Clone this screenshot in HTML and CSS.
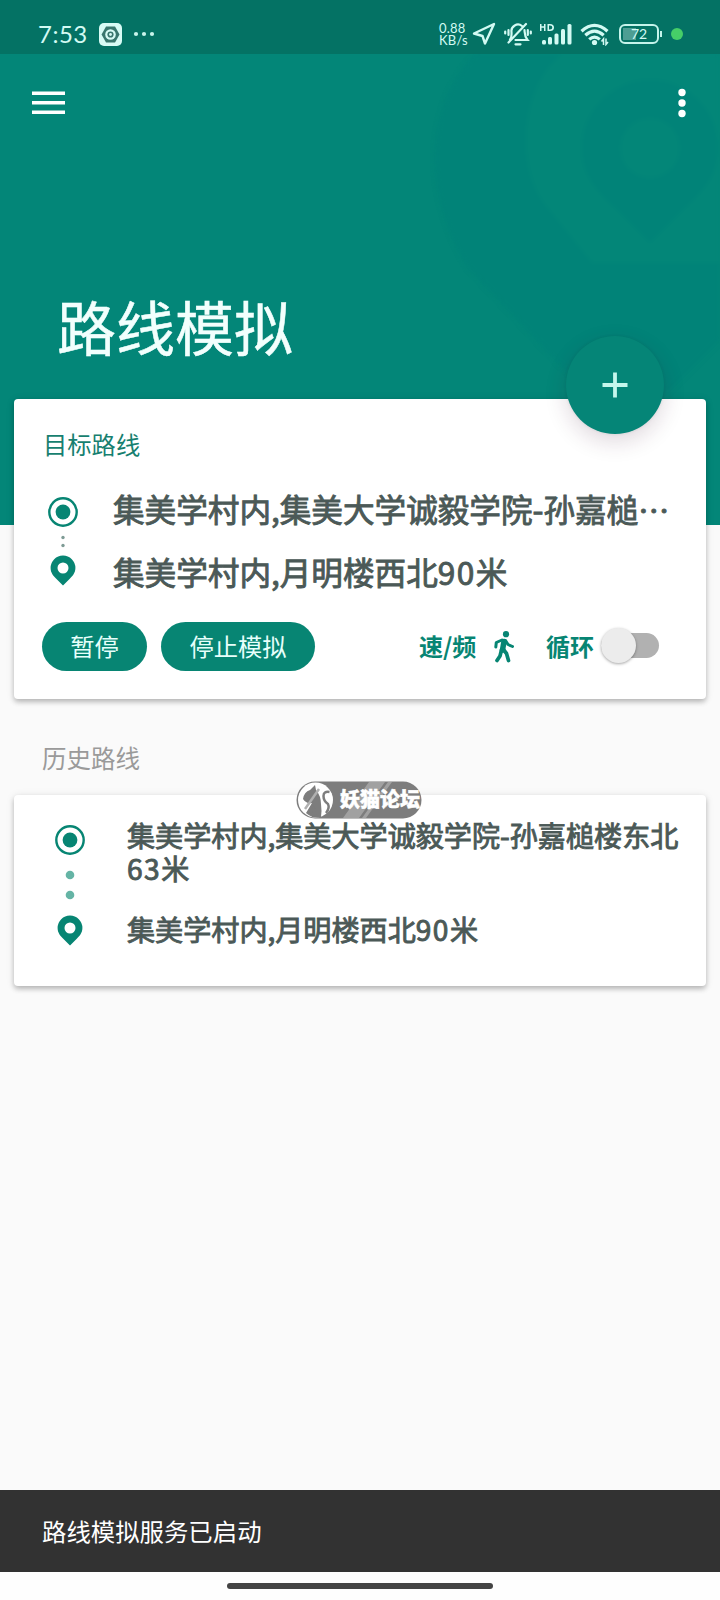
FILE: index.html
```html
<!DOCTYPE html>
<html lang="zh-CN">
<head>
<meta charset="utf-8">
<title>路线模拟</title>
<link rel="stylesheet" href="styles.css">
</head>
<body>
<div class="screen">
  <header class="header">
    <svg class="header-art" viewBox="0 0 720 525">
      <path fill="#018378" d="M476 53C420 110 425 200 468 268L560 365L600 400H660L720 340V53z"/>
      <path fill="#038678" d="M563 53C520 85 514 165 545 205L592 263H720V53z"/>
      <path fill="#018378" fill-rule="evenodd" d="M650 80a68 68 0 0 0-68 68c0 28 16 43 30 57l38 38 38-38c14-14 30-29 30-57a68 68 0 0 0-68-68zm0 38a30 30 0 1 1 0 60 30 30 0 0 1 0-60z"/>
    </svg>
    <div class="status">
      <span class="time">7:53</span>
      <svg class="app-icon" viewBox="0 0 23 23">
        <rect width="23" height="23" rx="5" fill="#d8fbf5"/>
        <path d="M7 3.5h9l4.5 8-4.5 8H7l-4.5-8z" fill="#39766d"/>
        <circle cx="11.5" cy="11.5" r="5.3" fill="#d8fbf5"/>
        <circle cx="11.5" cy="11.5" r="3.1" fill="#39766d"/>
        <circle cx="11.5" cy="11.5" r="1.4" fill="#d8fbf5"/>
      </svg>
      <svg class="more-note" viewBox="0 0 22 6" fill="#c9f5ec"><circle cx="3" cy="3" r="2.1"/><circle cx="11" cy="3" r="2.1"/><circle cx="19" cy="3" r="2.1"/></svg>
      <span class="speed">0.88<br>KB/s</span>
      <svg class="nav-icon" viewBox="0 0 24 24"><path d="M2 11.5L22 2L13 21.5L10.5 14z" fill="none" stroke="#d3faf3" stroke-width="2.4" stroke-linejoin="round"/></svg>
      <svg class="bell-icon" viewBox="0 0 28 24" fill="none" stroke="#d3faf3" stroke-width="2.2" stroke-linecap="round">
        <path d="M6 17.500C8 15.500 7.500 13 7.500 10a6.500 6.500 0 0 1 10.500-6M20.500 8c.3 4 0 6.500 3 10H11.500M4.500 20.500L22 2"/>
        <path d="M11.500 22.300h5M4.500 8v5M1.200 9.500v2M23.800 8v5M26.800 9.500v2"/>
      </svg>
      <svg class="signal-icon" viewBox="0 0 32 22" fill="#d3faf3">
        <path d="M0 1h1.500v2.300H4V1h1.500v7H4V4.800H1.500V8H0zM7.500 1H10q4 0 4 3.500T10 8H7.500zM9 2.500v4h1q2.300 0 2.300-2t-2.300-2z" fill-rule="evenodd"/>
        <rect x="2" y="17" width="4" height="4.500" rx="1.500"/><rect x="8" y="14" width="4" height="7.500" rx="1.500"/><rect x="14.500" y="10.500" width="4" height="11" rx="1.500"/><rect x="21" y="6" width="4" height="15.500" rx="1.500"/><rect x="27.500" y="1" width="4" height="20.500" rx="1.500"/>
      </svg>
      <svg class="wifi-icon" viewBox="0 0 30 23" fill="none" stroke="#d3faf3" stroke-width="3.200">
        <path d="M1.500 8.200q13-11.700 26 0M5.300 12.300q9.200-8.200 18.400 0M9.200 16.400q5.300-4.500 10.600 0"/>
        <circle cx="14.500" cy="19.500" r="2.600" fill="#d3faf3" stroke="none"/>
        <path d="M23.500 22v-6l-2 2.500M26 15.500v6l2-2.500" stroke-width="1.500"/>
      </svg>
      <div class="battery"><span>72</span></div>
      <i class="live-dot"></i>
    </div>
    <div class="toolbar">
      <svg class="menu-icon" viewBox="0 0 33 24" fill="#fff"><path d="M0 .5h33v3.600H0zM0 9.900h33v3.600H0zM0 19.400h33V23H0z"/></svg>
      <svg class="dots-icon" viewBox="0 0 8 30" fill="#fff"><circle cx="4" cy="4.500" r="3.700"/><circle cx="4" cy="15" r="3.700"/><circle cx="4" cy="25.500" r="3.700"/></svg>
    </div>
    <h1 class="title">路线模拟</h1>
  </header>

  <main class="main">
    <section class="card current">
      <button class="fab" aria-label="添加"><svg viewBox="0 0 26 26"><path d="M13 .5v25M.5 13h25" stroke="#c5f7ec" stroke-width="3.800"/></svg></button>
      <h2 class="card-label">目标路线</h2>
      <div class="route">
        <div class="marks">
          <svg class="origin" viewBox="0 0 30 30"><circle cx="15" cy="15" r="13.700" fill="none" stroke="#078573" stroke-width="2.400"/><circle cx="15" cy="15" r="7.400" fill="#078573"/></svg>
          <svg class="link" viewBox="0 0 6 13" fill="#7e9b95"><circle cx="3" cy="2.500" r="1.700"/><circle cx="3" cy="10.500" r="1.700"/></svg>
          <svg class="pin" viewBox="0 0 26 31"><path fill="#078573" fill-rule="evenodd" d="M13 .5A12.400 12.400 0 0 0 .6 13c0 5 3 8 5.400 10.500l7 7 7-7C22.400 21 25.400 18 25.400 13A12.400 12.400 0 0 0 13 .5zm0 7a5.500 5.500 0 1 1 0 11 5.500 5.500 0 0 1 0-11z"/></svg>
        </div>
        <div class="places">
          <p>集美学村内,集美大学诚毅学院-孙嘉槌<span class="ellipsis">⋯</span></p>
          <p>集美学村内,月明楼西北<span class="num">90</span>米</p>
        </div>
      </div>
      <div class="actions">
        <button class="pill">暂停</button>
        <button class="pill wide">停止模拟</button>
        <span class="option speed-opt">速/频</span>
        <svg class="walk" viewBox="0 0 20 32" fill="none" stroke="#078573" stroke-linecap="round" stroke-linejoin="round">
          <circle cx="12" cy="3.200" r="3.100" fill="#078573" stroke="none"/>
          <path d="M10 10.500L8.500 19" stroke-width="5.500"/>
          <path d="M8 9L2.300 11.500L1.800 16M11.500 9.500L14 13.500L18.500 15.500" stroke-width="3"/>
          <path d="M7.500 19L6 25L3 29.500M9 18L12.500 22.500L14.500 29.500" stroke-width="3.700"/>
        </svg>
        <span class="option loop-opt">循环</span>
        <span class="switch"></span>
      </div>
    </section>

    <h2 class="history-label">历史路线</h2>

    <section class="card history">
      <div class="watermark">
        <svg viewBox="0 0 126 38">
          <rect x=".5" y=".5" width="125" height="37" rx="18.500" fill="#7d7d7d"/>
          <path d="M73 1h16L63 37H47zM92 1h4L70 37h-4z" fill="#a1a1a1"/>
          <circle cx="19.500" cy="19" r="17.500" fill="#fff"/>
          <path d="M7 18q1-7 7-9l5-5 1 5q5 6 5 14 1 7 0 13-8 2-15-4L16 22q-6 1-9-4z" fill="#7d7d7d"/>
          <path d="M17 24q4 5 3 12h-4z" fill="#7d7d7d"/>
          <path d="M33.500 11q-6-1-6 4t4.500 8q2 4-2 9" fill="none" stroke="#7d7d7d" stroke-width="2.500"/>
          <path d="M23 8L9 28" stroke="#b0b0b0" stroke-width="2.500"/>
        </svg>
        <span>妖猫论坛</span>
      </div>
      <div class="route">
        <div class="marks">
          <svg class="origin" viewBox="0 0 30 30"><circle cx="15" cy="15" r="13.700" fill="none" stroke="#078573" stroke-width="2.400"/><circle cx="15" cy="15" r="7.400" fill="#078573"/></svg>
          <svg class="link" viewBox="0 0 10 30" fill="#65b4a5"><circle cx="5" cy="5" r="4.300"/><circle cx="5" cy="25" r="4.300"/></svg>
          <svg class="pin" viewBox="0 0 26 31"><path fill="#078573" fill-rule="evenodd" d="M13 .5A12.400 12.400 0 0 0 .6 13c0 5 3 8 5.400 10.500l7 7 7-7C22.400 21 25.400 18 25.400 13A12.400 12.400 0 0 0 13 .5zm0 7a5.500 5.500 0 1 1 0 11 5.500 5.500 0 0 1 0-11z"/></svg>
        </div>
        <div class="places">
          <p>集美学村内,集美大学诚毅学院-孙嘉槌楼东北<br><span class="num">63</span>米</p>
          <p>集美学村内,月明楼西北<span class="num">90</span>米</p>
        </div>
      </div>
    </section>
  </main>

  <div class="snackbar">路线模拟服务已启动</div>
  <div class="gesture"><i></i></div>
</div>
</body>
</html>
```
FILE: styles.css
```css
* { box-sizing: border-box; }
body {
  margin: 0;
  font-family: "Noto Sans CJK SC", sans-serif;
  background: #fafafa;
}
h1, h2, p { margin: 0; font-weight: 400; }
svg { display: block; flex: none; }
button { border: 0; padding: 0; font: inherit; }

.screen {
  width: 720px;
  height: 1600px;
  display: flex;
  flex-direction: column;
  overflow: hidden;
  background: #fafafa;
}

/* Header */
.header {
  position: relative;
  flex: none;
  height: 525px;
  background: #038678;
}
.header-art { position: absolute; inset: 0; width: 720px; height: 525px; filter: blur(2px); }
.status {
  position: relative;
  height: 54px;
  padding: 14px 37px 0 38px;
  display: flex;
  align-items: center;
  background: #047264;
  color: #d3faf3;
}
.time { width: 61px; font: 24px/30px Lato, sans-serif; letter-spacing: .5px; }
.app-icon { width: 23px; height: 23px; }
.more-note { width: 22px; height: 6px; margin-left: 11px; }
.speed {
  margin-left: auto;
  width: 33px;
  font: 13px/12px Lato, sans-serif;
  letter-spacing: .2px;
  white-space: nowrap;
}
.nav-icon { width: 24px; height: 24px; }
.bell-icon { width: 28px; height: 24px; margin-left: 8px; }
.signal-icon { width: 32px; height: 22px; margin-left: 8px; }
.wifi-icon { width: 30px; height: 23px; margin-left: 8px; }
.battery {
  position: relative;
  width: 40px;
  height: 20px;
  margin: 0 12px 0 9px;
  padding: 2px;
  border: 2px solid #c5f4eb;
  border-radius: 6px;
}
.battery::after {
  content: "";
  position: absolute;
  left: 39px;
  top: 5px;
  width: 2px;
  height: 6px;
  background: #c5f4eb;
}
.battery span {
  display: block;
  height: 12px;
  font: 14px/12px Lato, sans-serif;
  text-align: center;
  background: linear-gradient(90deg, #4d9e93 40%, transparent 40%);
}
.live-dot { width: 12px; height: 12px; border-radius: 50%; background: #46cf68; }

.toolbar {
  position: relative;
  height: 98px;
  padding: 0 34px 0 32px;
  display: flex;
  align-items: center;
  justify-content: space-between;
}
.menu-icon { width: 33px; height: 24px; }
.dots-icon { width: 8px; height: 30px; }
.title {
  position: relative;
  margin: 130px 0 0 57px;
  color: #f2fffd;
  font-size: 59px;
  line-height: 88px;
  -webkit-text-stroke: .5px currentColor;
}

/* Cards */
.main { position: relative; flex: 1; margin-top: -126px; padding: 0 14px; }
.card {
  position: relative;
  background: #fff;
  border-radius: 4px;
  box-shadow: 0 3px 5px rgba(0, 0, 0, .22), 0 1px 8px rgba(0, 0, 0, .1);
}
.current { height: 300px; padding: 28px 28px 0; }
.fab {
  position: absolute;
  left: 552px;
  top: -63px;
  width: 98px;
  height: 98px;
  display: grid;
  place-items: center;
  border-radius: 50%;
  background: #058577;
  box-shadow: 0 8px 22px rgba(60, 20, 50, .16), 0 0 3px rgba(0, 60, 50, .12);
}
.fab svg { width: 26px; height: 26px; }
.card-label { padding-left: 1px; color: #177f70; font-size: 24.300px; line-height: 34px; }

.route { display: flex; color: #4b5957; white-space: nowrap; }
.places { -webkit-text-stroke: .9px currentColor; }
.num { letter-spacing: 1.500px; }
.marks { display: flex; flex-direction: column; align-items: center; width: 30px; flex: none; }
.origin { width: 30px; height: 30px; }
.pin { width: 26px; height: 31px; }

.current .route { margin-top: 16px; padding-left: 6px; }
.current .marks { padding-top: 20px; }
.current .link { width: 6px; height: 13px; margin: 8px 0 7px; }
.current .places { margin-left: 35px; font-size: 31.600px; line-height: 63px; }
.ellipsis { font-size: 31px; }

.actions { display: flex; align-items: center; height: 49px; margin-top: 19px; }
.pill {
  width: 105px;
  height: 49px;
  padding-bottom: 2px;
  border-radius: 25px;
  background: #078573;
  color: #e6fffb;
  font-size: 24.300px;
  line-height: 47px;
}
.pill.wide { width: 154px; margin-left: 14px; }
.option { color: #078573; font-size: 24px; line-height: 34px; padding-bottom: 1px; font-weight: 700; }
.speed-opt { margin-left: 104px; width: 75px; }
.walk { width: 20px; height: 32px; }
.loop-opt { margin-left: 32px; width: 55px; }
.switch {
  position: relative;
  top: -1px;
  width: 58px;
  height: 25px;
  border-radius: 13px;
  background: #b1b1b1;
}
.switch::before {
  content: "";
  position: absolute;
  left: 0;
  top: -5px;
  width: 35px;
  height: 35px;
  border-radius: 50%;
  background: #ececec;
  box-shadow: 0 1px 3px rgba(0, 0, 0, .35);
}

.history-label { margin: 42px 0 0 28px; color: #9a9a9a; font-size: 24.500px; line-height: 34px; }
.history { height: 191px; margin-top: 20px; padding: 23px 0 0 41px; }
.history .marks { padding-top: 7px; }
.history .link { width: 10px; height: 30px; margin: 15px 0; }
.history .places { margin-left: 42px; font-size: 28.100px; line-height: 33px; }
.history .places p + p { margin-top: 28px; }

.watermark { position: absolute; left: 282px; top: -14px; width: 126px; height: 38px; }
.watermark span {
  position: absolute;
  left: 44px;
  top: 3px;
  color: #fff;
  font-size: 20px;
  line-height: 30px;
  font-weight: 900;
  -webkit-text-stroke: .5px currentColor;
  white-space: nowrap;
}

/* Bottom */
.snackbar {
  flex: none;
  height: 82px;
  padding-left: 42px;
  background: #323232;
  color: #fff;
  font-size: 24.400px;
  line-height: 81px;
}
.gesture { flex: none; height: 28px; display: grid; place-items: center; background: #fefefe; }
.gesture i { width: 266px; height: 6px; border-radius: 3px; background: #444; }
```
